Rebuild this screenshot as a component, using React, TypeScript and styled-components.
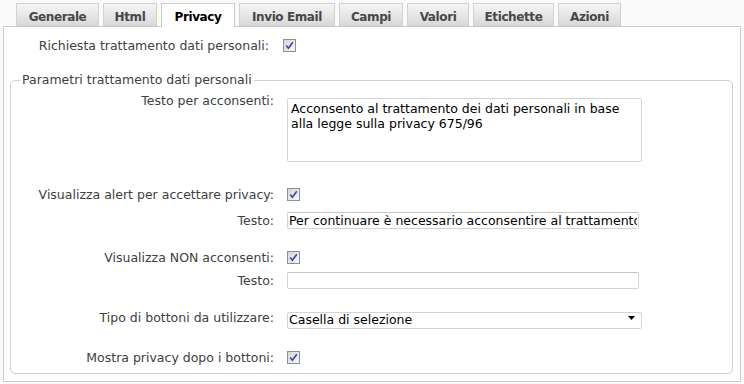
import React from "react";
import styled, { createGlobalStyle } from "styled-components";

const GlobalStyle = createGlobalStyle`
  html, body { margin: 0; padding: 0; }
  body {
    background: #fafafa;
    font-family: "DejaVu Sans", Verdana, sans-serif;
    width: 744px;
    height: 384px;
    overflow: hidden;
  }
`;

const Page = styled.div`
  padding-top: 3px;
`;

const TabBar = styled.div`
  display: flex;
  align-items: flex-end;
  gap: 4px;
  padding-left: 16px;
  height: 23px;
  position: relative;
  z-index: 1;
`;

const Tab = styled.div<{ $w: number; $active?: boolean }>`
  box-sizing: border-box;
  width: ${(p) => p.$w}px;
  height: ${(p) => (p.$active ? 24 : 23)}px;
  margin-bottom: ${(p) => (p.$active ? -1 : 0)}px;
  border: 1px solid ${(p) => (p.$active ? "#cccccc" : "#d2d2d2")};
  border-bottom: ${(p) => (p.$active ? "none" : "1px solid #d2d2d2")};
  background: ${(p) =>
    p.$active ? "#ffffff" : "linear-gradient(#f5f5f5, #d9d9d9)"};
  color: ${(p) => (p.$active ? "#000000" : "#484848")};
  font-weight: bold;
  font-size: 12px;
  letter-spacing: -0.4px;
  line-height: 22px;
  padding-top: 2px;
  text-align: center;
`;

const Panel = styled.div`
  margin: 0 3px;
  border: 1px solid #cccccc;
  background: #ffffff;
  padding: 10px 0 7px 0;
  height: 356px;
  box-sizing: border-box;
`;

const Row = styled.div<{ $labelW: number; $gap: number; $mt?: number; $top?: boolean }>`
  display: flex;
  align-items: ${(p) => (p.$top ? "flex-start" : "center")};
  gap: ${(p) => p.$gap}px;
  margin-top: ${(p) => p.$mt ?? 0}px;
  min-height: 17px;

  & > label {
    width: ${(p) => p.$labelW}px;
  }
`;

const Label = styled.label<{ $shift?: number }>`
  flex: none;
  text-align: right;
  font-size: 12.5px;
  line-height: 17px;
  color: #404040;
  margin-top: ${(p) => p.$shift ?? 0}px;
  white-space: nowrap;
`;

const Fieldset = styled.fieldset`
  margin: 18px 7px 0 6px;
  padding: 10px 0 7px 0;
  border: 1px solid #d0d0d0;
  border-radius: 5px;
  min-width: 0;
`;

const Legend = styled.legend`
  margin-left: 9px;
  padding: 0 2px;
  font-size: 12.5px;
  line-height: 16px;
  color: #404040;
`;

const CheckBox = styled.span`
  box-sizing: border-box;
  display: inline-flex;
  align-items: center;
  justify-content: center;
  width: 13px;
  height: 13px;
  border: 1px solid #8f8f8f;
  background: linear-gradient(135deg, #d6d6d6, #f7f7f7);
  flex: none;
`;

const TextArea = styled.textarea`
  box-sizing: border-box;
  width: 355px;
  height: 64px;
  border: 1px solid #d4d4d4;
  border-radius: 2px;
  padding: 2px 3px;
  margin: 0;
  resize: none;
  overflow: hidden;
  font-family: "DejaVu Sans", Verdana, sans-serif;
  font-size: 12.5px;
  line-height: 15px;
  color: #000;
  background: #fff;
  outline: none;
`;

const TextInput = styled.input`
  box-sizing: border-box;
  width: 352px;
  height: 17px;
  border: 1px solid #d4d4d4;
  border-top-color: #c4c4c4;
  border-radius: 2px;
  padding: 0 1px;
  margin: 0;
  font-family: "DejaVu Sans", Verdana, sans-serif;
  font-size: 12.5px;
  line-height: 15px;
  color: #000;
  background: #fff;
  outline: none;
`;

const SelectWrap = styled.div`
  position: relative;
  width: 355px;
  height: 17px;
`;

const Select = styled.select`
  box-sizing: border-box;
  appearance: none;
  width: 100%;
  height: 17px;
  border: 1px solid #d4d4d4;
  border-radius: 2px;
  padding: 0 1px 2px 1px;
  margin: 0;
  font-family: "DejaVu Sans", Verdana, sans-serif;
  font-size: 12.5px;
  line-height: 14px;
  color: #000;
  background: #fff;
  outline: none;
`;

const Arrow = styled.svg`
  position: absolute;
  right: 7px;
  top: 7px;
  pointer-events: none;
`;

function Check() {
  return (
    <CheckBox>
      <svg width="11" height="11" viewBox="0 0 11 11">
        <path
          d="M2.2 5.6 L4.4 8.2 L8.8 2.2"
          fill="none"
          stroke="#3446a8"
          strokeWidth="1.6"
        />
      </svg>
    </CheckBox>
  );
}

const tabs: { name: string; w: number; active?: boolean }[] = [
  { name: "Generale", w: 83 },
  { name: "Html", w: 54 },
  { name: "Privacy", w: 74, active: true },
  { name: "Invio Email", w: 96 },
  { name: "Campi", w: 64 },
  { name: "Valori", w: 62 },
  { name: "Etichette", w: 81 },
  { name: "Azioni", w: 63 },
];

const LW = 263;
const GAP = 13;

export default function App() {
  return (
    <Page>
      <GlobalStyle />
      <TabBar>
        {tabs.map((t) => (
          <Tab key={t.name} $w={t.w} $active={t.active}>
            {t.name}
          </Tab>
        ))}
      </TabBar>
      <Panel>
        <Row $labelW={265} $gap={14}>
          <Label>Richiesta trattamento dati personali:</Label>
          <Check />
        </Row>
        <Fieldset>
          <Legend>Parametri trattamento dati personali</Legend>
          <Row $labelW={LW} $gap={GAP} $top>
            <Label $shift={-6}>Testo per acconsenti:</Label>
            <TextArea
              readOnly
              value="Acconsento al trattamento dei dati personali in base alla legge sulla privacy 675/96"
            />
          </Row>
          <Row $labelW={LW} $gap={GAP} $mt={24}>
            <Label>Visualizza alert per accettare privacy:</Label>
            <Check />
          </Row>
          <Row $labelW={LW} $gap={GAP} $mt={9}>
            <Label>Testo:</Label>
            <TextInput
              readOnly
              value="Per continuare è necessario acconsentire al trattamento dei dati personali"
            />
          </Row>
          <Row $labelW={LW} $gap={GAP} $mt={20}>
            <Label>Visualizza NON acconsenti:</Label>
            <Check />
          </Row>
          <Row $labelW={LW} $gap={GAP} $mt={6}>
            <Label>Testo:</Label>
            <TextInput readOnly value="" />
          </Row>
          <Row $labelW={LW} $gap={GAP} $mt={20}>
            <Label>Tipo di bottoni da utilizzare:</Label>
            <SelectWrap>
              <Select defaultValue="casella">
                <option value="casella">Casella di selezione</option>
              </Select>
              <Arrow width="7" height="4" viewBox="0 0 7 4">
                <polygon points="0,0 7,0 3.5,4" fill="#000" />
              </Arrow>
            </SelectWrap>
          </Row>
          <Row $labelW={LW} $gap={GAP} $mt={23}>
            <Label>Mostra privacy dopo i bottoni:</Label>
            <Check />
          </Row>
        </Fieldset>
      </Panel>
    </Page>
  );
}
